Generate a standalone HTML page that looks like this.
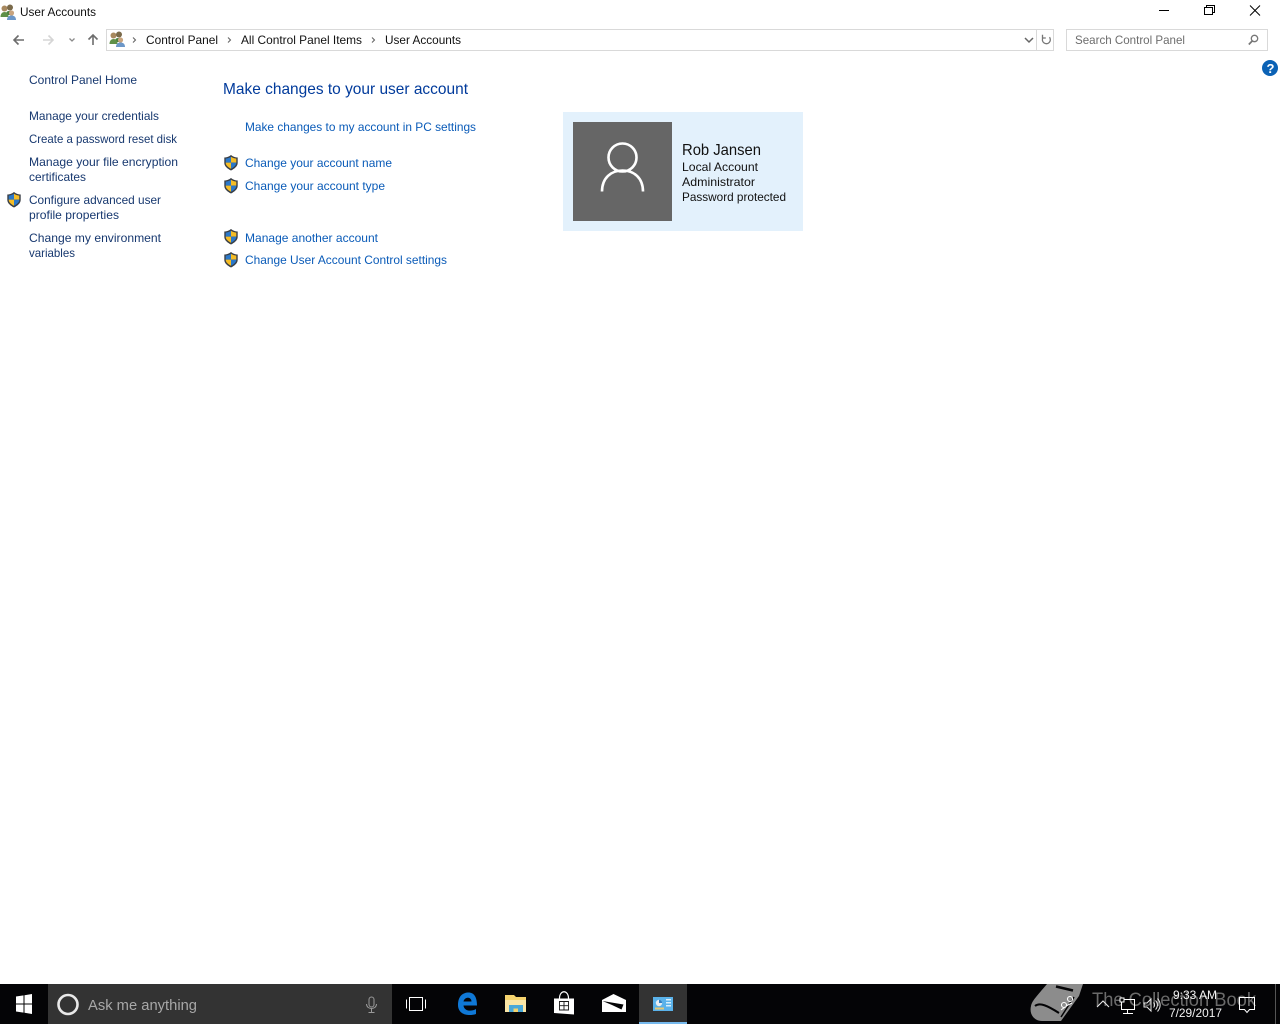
<!DOCTYPE html>
<html lang="en"><head><meta charset="utf-8"><title>User Accounts</title>
<style>
html,body{margin:0;padding:0;background:#fff;width:1280px;height:1024px;overflow:hidden}
svg{display:block}
text{font-family:"Liberation Sans",sans-serif;font-size:12px}
.nav{fill:#17386f}
.lk{fill:#0a5bb8}
.bk{fill:#111}
</style></head><body>
<svg width="1280" height="1024" viewBox="0 0 1280 1024" xmlns="http://www.w3.org/2000/svg">
<defs>
<g id="sh">
<path d="M7 0 C5 1.800 2.500 2.400 0.300 2.500 V8 C0.300 11.200 3.500 13.800 7 15.500 C10.500 13.800 13.700 11.200 13.700 8 V2.500 C11.500 2.400 9 1.800 7 0Z" fill="#3a3f46"/>
<path d="M7 1.700 C5.500 2.800 3.800 3.400 1.700 3.600 V7.600 H7Z" fill="#2b78c9"/>
<path d="M7 1.700 C8.500 2.800 10.200 3.400 12.300 3.600 V7.600 H7Z" fill="#f6bd25"/>
<path d="M1.700 7.600 H7 V13.800 C4.400 12.400 1.700 10.400 1.700 7.600Z" fill="#f6bd25"/>
<path d="M12.300 7.600 H7 V13.800 C9.600 12.400 12.300 10.400 12.300 7.600Z" fill="#2b78c9"/>
</g>
<g id="ua">
<circle cx="4.500" cy="4.500" r="3" fill="#a8895f"/>
<path d="M0.500 13 C0.500 9.500 2.500 8 4.500 8 C7 8 8.500 9.500 8.500 13Z" fill="#5f9048"/>
<circle cx="10" cy="3.500" r="3" fill="#7a6a4a"/>
<path d="M6.500 8 C8 6.500 12 6.500 13.500 8 L12 11 H8Z" fill="#4c7f3e"/>
<circle cx="11.500" cy="9" r="2.600" fill="#c9a47e"/>
<path d="M7 16 C7 12.800 9 11.500 11.500 11.500 C14 11.500 16 12.800 16 16Z" fill="#6c97c8"/>
</g>
</defs>
<rect width="1280" height="1024" fill="#fff"/>

<!-- title bar -->
<use href="#ua" x="0" y="4"/>
<text x="20" y="16" textLength="76" lengthAdjust="spacingAndGlyphs" class="bk">User Accounts</text>
<path d="M1159 10.500H1169" stroke="#000" fill="none"/>
<path d="M1204.500 7.500H1212.500V14.500H1204.500ZM1206.500 7.500V5.500H1214.500V12.500H1212.500" stroke="#000" fill="none"/>
<path d="M1250 5.500L1260 15.500M1260 5.500L1250 15.500" stroke="#000" fill="none"/>

<!-- nav buttons -->
<path d="M14 40H24M18.500 35.500L14 40L18.500 44.500" stroke="#6d6d6d" stroke-width="1.600" fill="none"/>
<path d="M43 40H53M48.500 35.500L53 40L48.500 44.500" stroke="#d5d5d5" stroke-width="1.600" fill="none"/>
<path d="M69.500 38.500L72 41L74.500 38.500" stroke="#8a8a8a" stroke-width="1.300" fill="none"/>
<path d="M93 45V35M88.500 39.500L93 35L97.500 39.500" stroke="#6d6d6d" stroke-width="1.600" fill="none"/>

<!-- address bar -->
<rect x="106.500" y="29.500" width="947" height="21" fill="#fff" stroke="#d9d9d9"/>
<path d="M1036.500 30V50" stroke="#d9d9d9"/>
<use href="#ua" x="109" y="31"/>
<path d="M133 37.500L135.500 40L133 42.500M228 37.500L230.500 40L228 42.500M372 37.500L374.500 40L372 42.500" stroke="#666" stroke-width="1.100" fill="none"/>
<text x="146" y="44" textLength="72" lengthAdjust="spacingAndGlyphs" class="bk">Control Panel</text>
<text x="241" y="44" textLength="121" lengthAdjust="spacingAndGlyphs" class="bk">All Control Panel Items</text>
<text x="385" y="44" textLength="76" lengthAdjust="spacingAndGlyphs" class="bk">User Accounts</text>
<path d="M1025 38L1029 42L1033 38" stroke="#666" stroke-width="1.500" fill="none"/>
<path d="M1049.500 37.200A4 4 0 1 1 1043 37.500M1042.500 34.800V38H1045.800" stroke="#777" stroke-width="1.300" fill="none"/>

<!-- search -->
<rect x="1066.500" y="29.500" width="201" height="21" fill="#fff" stroke="#d9d9d9"/>
<text x="1075" y="44" textLength="110" lengthAdjust="spacingAndGlyphs" fill="#6d6d6d">Search Control Panel</text>
<circle cx="1254.500" cy="38.500" r="3.200" fill="none" stroke="#777" stroke-width="1.300"/>
<path d="M1252.200 41L1248.800 44.500" stroke="#777" stroke-width="1.700"/>

<!-- help -->
<circle cx="1270" cy="68" r="8" fill="#0b62b5"/>
<text x="1266.500" y="73" style="font-size:13px;font-weight:bold" fill="#fff">?</text>

<!-- sidebar -->
<text x="29" y="84" textLength="108" lengthAdjust="spacingAndGlyphs" class="nav">Control Panel Home</text>
<text x="29" y="120" textLength="130" lengthAdjust="spacingAndGlyphs" class="nav">Manage your credentials</text>
<text x="29" y="143" textLength="148" lengthAdjust="spacingAndGlyphs" class="nav">Create a password reset disk</text>
<text x="29" y="166" textLength="149" lengthAdjust="spacingAndGlyphs" class="nav">Manage your file encryption</text>
<text x="29" y="181" textLength="57" lengthAdjust="spacingAndGlyphs" class="nav">certificates</text>
<use href="#sh" x="7" y="192"/>
<text x="29" y="204" textLength="132" lengthAdjust="spacingAndGlyphs" class="nav">Configure advanced user</text>
<text x="29" y="219" textLength="90" lengthAdjust="spacingAndGlyphs" class="nav">profile properties</text>
<text x="29" y="242" textLength="132" lengthAdjust="spacingAndGlyphs" class="nav">Change my environment</text>
<text x="29" y="257" textLength="46" lengthAdjust="spacingAndGlyphs" class="nav">variables</text>

<!-- main -->
<text x="223" y="94" textLength="245" lengthAdjust="spacingAndGlyphs" style="font-size:16px" fill="#003a9b">Make changes to your user account</text>
<text x="245" y="131" textLength="231" lengthAdjust="spacingAndGlyphs" class="lk">Make changes to my account in PC settings</text>
<use href="#sh" x="224" y="155"/>
<text x="245" y="167" textLength="147" lengthAdjust="spacingAndGlyphs" class="lk">Change your account name</text>
<use href="#sh" x="224" y="178"/>
<text x="245" y="190" textLength="140" lengthAdjust="spacingAndGlyphs" class="lk">Change your account type</text>
<use href="#sh" x="224" y="229"/>
<text x="245" y="242" textLength="133" lengthAdjust="spacingAndGlyphs" class="lk">Manage another account</text>
<use href="#sh" x="224" y="252"/>
<text x="245" y="264" textLength="202" lengthAdjust="spacingAndGlyphs" class="lk">Change User Account Control settings</text>

<!-- card -->
<rect x="563" y="112" width="240" height="119" fill="#e3f1fc"/>
<rect x="573" y="122" width="99" height="99" fill="#666"/>
<circle cx="622.500" cy="157.500" r="14" fill="none" stroke="#fff" stroke-width="2.600"/>
<path d="M602 191.500C602 178 611 170.500 622.500 170.500C634 170.500 643 178 643 191.500" fill="none" stroke="#fff" stroke-width="2.600"/>
<text x="682" y="155" textLength="79" lengthAdjust="spacingAndGlyphs" style="font-size:16px" class="bk">Rob Jansen</text>
<text x="682" y="171" textLength="76" lengthAdjust="spacingAndGlyphs" class="bk">Local Account</text>
<text x="682" y="186" textLength="73" lengthAdjust="spacingAndGlyphs" class="bk">Administrator</text>
<text x="682" y="201" textLength="104" lengthAdjust="spacingAndGlyphs" class="bk">Password protected</text>

<!-- taskbar -->
<rect x="0" y="984" width="1280" height="40" fill="#040406"/>
<path d="M16 996.500L23.500 995.400V1003.500H16ZM24.500 995.200L32 994V1003.500H24.500ZM16 1004.500H23.500V1012.600L16 1011.500ZM24.500 1004.500H32V1014L24.500 1012.800Z" fill="#fff"/>
<rect x="48" y="984" width="344" height="40" fill="#333"/>
<circle cx="68" cy="1004.500" r="9.500" fill="none" stroke="#e8e8e8" stroke-width="2.600"/>
<text x="88" y="1010" textLength="109" lengthAdjust="spacingAndGlyphs" style="font-size:15px" fill="#a8a8a8">Ask me anything</text>
<rect x="369" y="997" width="5" height="10" rx="2.500" fill="none" stroke="#9a9a9a"/>
<path d="M366.500 1004C366.500 1010 376.500 1010 376.500 1004M371.500 1009V1012.500M368.500 1012.500H374.500" fill="none" stroke="#9a9a9a"/>

<!-- task view -->
<path d="M409.500 997.500H422.500V1010.500H409.500ZM406.500 999.500V1008.500M425.500 999.500V1008.500" fill="none" stroke="#fff" stroke-width="1"/>

<!-- edge -->
<path d="M458 1005C458 996 463 992.500 468.500 992.500C474 992.500 477 997 477 1005.500H463.500C464 1011 471 1012 476 1009V1014C469 1016.500 458 1015 458 1005ZM463.500 1001.500H471.500C471.500 996.500 464.500 996.500 463.500 1001.500Z" fill="#0f78d6" fill-rule="evenodd"/>

<!-- explorer -->
<path d="M505 995H514L516 997H526V1012H505Z" fill="#f5d36e"/>
<path d="M505 1000H526V1012H505Z" fill="#fbe6a6"/>
<path d="M509 1012V1005H523V1012H518V1008.500H513.500V1012Z" fill="#4aa8d8"/>
<rect x="513.500" y="1008.500" width="4.500" height="3.500" fill="#f5d36e"/>

<!-- store -->
<path d="M554 998.500H574V1014.500L554 1013Z" fill="#fff"/>
<path d="M559.500 998.500C559.500 989.500 568.500 989.500 568.500 998.500" fill="none" stroke="#fff" stroke-width="1.200"/>
<path d="M559.500 1001.500H568.500V1010H559.500ZM564 1001.500V1010M559.500 1005.700H568.500" fill="none" stroke="#1a1a1a" stroke-width="0.900"/>

<!-- mail -->
<path d="M602 1000L613.500 994L626 1000V1012H602Z" fill="#fff"/>
<path d="M602.500 1001L623.500 1004.500L621.500 1009.500L612 1005Z" fill="#040406"/>

<!-- active app -->
<rect x="639" y="984" width="48" height="38" fill="#333"/>
<rect x="639" y="1022" width="48" height="2" fill="#76b9ed"/>
<rect x="653" y="997" width="20" height="14" fill="#5ab2ea"/>
<circle cx="659" cy="1003" r="3.200" fill="#e8edf2"/>
<path d="M659 1003V999.800A3.200 3.200 0 0 1 662.200 1003Z" fill="#2f7fc4"/>
<path d="M655 1009.500H664V1007.500H655Z" fill="#e3c878"/>
<rect x="666" y="999" width="5" height="1.500" fill="#d7eefc"/>
<rect x="666" y="1002" width="5" height="1.500" fill="#d7eefc"/>
<rect x="666" y="1005" width="5" height="1.500" fill="#d7eefc"/>

<!-- watermark book -->
<path d="M1047 984H1083L1079 996L1061 1021H1042C1034 1021 1029 1014 1031 1006C1032 1001 1036 997 1047 984Z" fill="#8c8c8c"/>
<path d="M1056 986.500L1073 990.500" stroke="#040406" stroke-width="2.500"/>
<path d="M1035 1006C1040 1002 1048 1006 1059 1013" fill="none" stroke="#040406" stroke-width="2"/>
<path d="M1074 997L1061 1017" stroke="#040406" stroke-width="1.500"/>
<circle cx="1070" cy="999" r="2.500" fill="none" stroke="#fff" stroke-width="1.100"/>
<circle cx="1064" cy="1005" r="2.500" fill="none" stroke="#fff" stroke-width="1.100"/>
<path d="M1066 1006L1072 1003M1061 1010L1065 1007" stroke="#fff"/>
<text x="1092" y="1006" textLength="164" lengthAdjust="spacingAndGlyphs" style="font-size:19px" fill="#6a6a6a">The Collection Book</text>

<!-- tray -->
<path d="M1097 1007L1103 1001L1109 1007" fill="none" stroke="#e8e8e8" stroke-width="1.100"/>
<path d="M1121.500 999.500H1134.500V1009.500H1121.500ZM1127.500 1009.500V1013M1123 1013.500H1133" fill="none" stroke="#fff"/>
<rect x="1120" y="998" width="4" height="4" fill="#040406" stroke="#fff"/>
<path d="M1144 1003H1147L1151 999V1011L1147 1007H1144ZM1153.500 1002.500C1155 1004 1155 1006 1153.500 1007.500M1155.500 1000.500C1158 1003 1158 1007 1155.500 1009.500M1157.500 998.500C1161 1002.500 1161 1007.500 1157.500 1011.500" fill="none" stroke="#e8e8e8"/>
<text x="1173" y="999" textLength="44" lengthAdjust="spacingAndGlyphs" fill="#f2f2f2">9:33 AM</text>
<text x="1169" y="1017" textLength="53" lengthAdjust="spacingAndGlyphs" fill="#f2f2f2">7/29/2017</text>
<path d="M1239.500 997.500H1254.500V1009.500H1249.500L1247 1012.500L1244.500 1009.500H1239.500Z" fill="none" stroke="#fff"/>
<path d="M1275.500 984V1024" stroke="#555"/>
</svg>
</body></html>
